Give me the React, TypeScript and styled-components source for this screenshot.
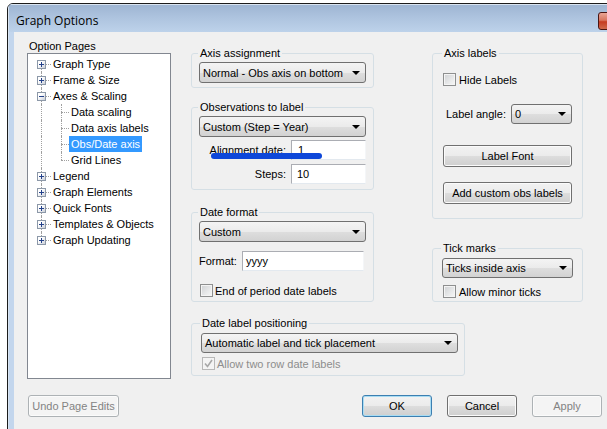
import React from "react";
import styled, { createGlobalStyle } from "styled-components";

const GlobalStyle = createGlobalStyle`
  html, body {
    margin: 0;
    padding: 0;
    background: #ffffff;
    overflow: hidden;
  }
  body {
    font-family: "Liberation Sans", Arial, sans-serif;
    font-size: 11px;
    color: #000000;
  }
`;

const Screen = styled.div`
  width: 607px;
  height: 429px;
  overflow: hidden;
  background: #ffffff;
`;

const Window = styled.div`
  margin: 3px 0 0 7px;
  width: 640px;
  height: 460px;
  box-sizing: border-box;
  border: 1px solid #1c1c1c;
  border-radius: 6px 6px 0 0;
  background: #c3d6ed;
  display: flex;
  flex-direction: column;
  overflow: hidden;
`;

const TitleBar = styled.div`
  height: 28px;
  flex-shrink: 0;
  display: flex;
  align-items: flex-start;
  justify-content: space-between;
  padding: 0 5px 0 8px;
  background: linear-gradient(#9db4d2 0%, #aec4df 50%, #bdd2ea 100%);
  box-shadow: inset 1px 1px 0 #d9e4f1;
`;

const Title = styled.div`
  font-family: "Open Sans", "Noto Sans", sans-serif;
  font-size: 12px;
  line-height: 16px;
  margin-top: 9px;
  color: #000000;
`;

const CloseButton = styled.div`
  margin-top: 8px;
  width: 43px;
  height: 18px;
  box-sizing: border-box;
  border: 1px solid #4a1512;
  border-radius: 3px;
  background: linear-gradient(#e9a596 0%, #d8765f 45%, #c63b22 55%, #d06a4c 100%);
  display: flex;
  align-items: center;
  padding-left: 9px;
`;

const Frame = styled.div`
  flex: 1;
  display: flex;
  padding: 0 6px;
  background: linear-gradient(90deg, #dae6f4 0, #dae6f4 1px, #c3d6ed 1px);
`;

const Content = styled.div`
  flex: 1;
  background: #f0f0f0;
  display: flex;
  flex-direction: column;
`;

const MainRow = styled.div`
  display: flex;
  align-items: flex-start;
  padding: 7px 0 0 13px;
`;

const LeftPane = styled.div`
  width: 144px;
  display: flex;
  flex-direction: column;
`;

const PaneLabel = styled.div`
  line-height: 14px;
  padding-left: 2px;
`;

const TreeBox = styled.div`
  height: 326px;
  box-sizing: border-box;
  border: 1px solid #828790;
  background: #ffffff;
  padding: 2px 0 0 9px;
`;

const TreeRow = styled.div<{ $child?: boolean; $first?: boolean; $last?: boolean }>`
  position: relative;
  height: 16px;
  display: flex;
  align-items: center;
  padding-left: ${(p) => (p.$child ? "24px" : "0")};

  &::before {
    content: "";
    position: absolute;
    left: ${(p) => (p.$child ? "24px" : "4px")};
    top: ${(p) => (p.$first ? "8px" : "0")};
    bottom: ${(p) => (p.$last ? "8px" : "0")};
    border-left: 1px dotted #a0a0a0;
  }

  &::after {
    content: "";
    display: ${(p) => (p.$child ? "block" : "none")};
    position: absolute;
    left: 4px;
    top: 0;
    bottom: 0;
    border-left: 1px dotted #a0a0a0;
  }
`;

const Expander = styled.span<{ $open?: boolean }>`
  position: relative;
  z-index: 1;
  width: 9px;
  height: 9px;
  box-sizing: border-box;
  border: 1px solid #8c98a8;
  background: linear-gradient(135deg, #ffffff 35%, #c9ced6 100%);
  flex-shrink: 0;

  &::before {
    content: "";
    position: absolute;
    left: 1px;
    right: 1px;
    top: 3px;
    height: 1px;
    background: #23418a;
  }

  &::after {
    content: "";
    display: ${(p) => (p.$open ? "none" : "block")};
    position: absolute;
    top: 1px;
    bottom: 1px;
    left: 3px;
    width: 1px;
    background: #23418a;
  }
`;

const Connector = styled.span<{ $w: number }>`
  width: ${(p) => p.$w}px;
  height: 0;
  border-top: 1px dotted #a0a0a0;
  flex-shrink: 0;
`;

const NodeLabel = styled.span<{ $selected?: boolean }>`
  height: 16px;
  line-height: 16px;
  padding: 0 2px;
  white-space: nowrap;
  background: ${(p) => (p.$selected ? "#3399ff" : "transparent")};
  color: ${(p) => (p.$selected ? "#ffffff" : "#000000")};
`;

const MainPane = styled.div`
  margin: 7px 0 0 20px;
  display: flex;
  flex-direction: column;
`;

const TopRow = styled.div`
  display: flex;
  align-items: flex-start;
  gap: 58px;
`;

const Column = styled.div<{ $w: number }>`
  width: ${(p) => p.$w}px;
  display: flex;
  flex-direction: column;
`;

const Group = styled.fieldset<{ $w: number; $pad: string; $mt?: number }>`
  margin: ${(p) => p.$mt ?? 0}px 0 0 0;
  width: ${(p) => p.$w}px;
  box-sizing: border-box;
  min-width: 0;
  padding: ${(p) => p.$pad};
  border: 1px solid #d5dfe5;
  border-radius: 3px;
  display: flex;
  flex-direction: column;
`;

const Legend = styled.legend`
  padding: 0 2px;
  margin-left: -1px;
  line-height: 14px;
  font-size: 11px;
`;

const Select = styled.div<{ $h?: number; $w?: number; $mt?: number }>`
  margin-top: ${(p) => p.$mt ?? 0}px;
  height: ${(p) => p.$h ?? 21}px;
  width: ${(p) => (p.$w ? `${p.$w}px` : "100%")};
  box-sizing: border-box;
  border: 1px solid #707070;
  border-radius: 3px;
  background: linear-gradient(#f4f4f4 0%, #ebebeb 50%, #dedede 51%, #d2d2d2 100%);
  display: flex;
  align-items: center;
  justify-content: space-between;
  padding: 0 5px 0 3px;
  white-space: nowrap;
  flex-shrink: 0;
`;

const Arrow = styled.span`
  width: 0;
  height: 0;
  border-left: 4px solid transparent;
  border-right: 4px solid transparent;
  border-top: 4px solid #000000;
`;

const FieldRow = styled.div<{ $mt: number }>`
  position: relative;
  margin-top: ${(p) => p.$mt}px;
  display: grid;
  grid-template-columns: 1fr 75px;
  column-gap: 5px;
  align-items: center;
`;

const FieldLabel = styled.span`
  text-align: right;
  white-space: nowrap;
`;

const TextBox = styled.div<{ $w?: number; $pl: number }>`
  height: 20px;
  width: ${(p) => (p.$w ? `${p.$w}px` : "100%")};
  box-sizing: border-box;
  border: 1px solid;
  border-color: #abadb3 #f4f6f8 #e3e9ef #abadb3;
  background: #ffffff;
  padding-left: ${(p) => p.$pl}px;
  display: flex;
  align-items: center;
`;

const Highlight = styled.span`
  position: absolute;
  left: 12px;
  top: 13px;
  width: 111px;
  height: 6px;
  border-radius: 3px;
  background: #0d47d9;
`;

const InlineRow = styled.div<{ $mt: number; $ml?: number; $gap: number }>`
  margin-top: ${(p) => p.$mt}px;
  margin-left: ${(p) => p.$ml ?? 0}px;
  display: flex;
  align-items: center;
  gap: ${(p) => p.$gap}px;
  white-space: nowrap;
`;

const Check = styled.span<{ $disabled?: boolean }>`
  width: 13px;
  height: 13px;
  box-sizing: border-box;
  border: 1px solid ${(p) => (p.$disabled ? "#b8b8b8" : "#8e8f8f")};
  background: ${(p) =>
    p.$disabled
      ? "#f4f4f4"
      : "linear-gradient(135deg, #cfd1d3 0%, #e8e9ea 60%, #f7f7f7 100%)"};
  box-shadow: inset 0 0 0 1px #f4f4f4;
  display: flex;
  align-items: center;
  justify-content: center;
  flex-shrink: 0;
`;

const Muted = styled.span`
  color: #8d8d8d;
`;

const Button = styled.div<{ $w: number; $disabled?: boolean; $default?: boolean; $mt?: number }>`
  margin-top: ${(p) => p.$mt ?? 0}px;
  width: ${(p) => p.$w}px;
  height: 22px;
  box-sizing: border-box;
  border: 1px solid
    ${(p) => (p.$disabled ? "#adb2b5" : p.$default ? "#3c7fb1" : "#707070")};
  border-radius: 3px;
  background: ${(p) =>
    p.$disabled
      ? "#f4f4f4"
      : "linear-gradient(#f2f2f2 0%, #ebebeb 50%, #dddddd 51%, #cfcfcf 100%)"};
  box-shadow: ${(p) => (p.$default ? "inset 0 0 0 1px #a8dcf3" : "inset 0 0 0 1px #fbfbfb")};
  color: ${(p) => (p.$disabled ? "#838383" : "#000000")};
  display: flex;
  align-items: center;
  justify-content: center;
  white-space: nowrap;
  flex-shrink: 0;
`;

const BottomBar = styled.div`
  margin-top: 16px;
  display: flex;
  align-items: center;
  padding: 0 38px 0 14px;
`;

const ButtonGroup = styled.div`
  margin-left: auto;
  display: flex;
  gap: 15px;
`;

const CloseGlyph = () => (
  <svg width="12" height="10" viewBox="0 0 12 10">
    <path d="M2 1.5 L10 8.5 M10 1.5 L2 8.5" stroke="#3b1512" strokeWidth="4" strokeLinecap="square" />
    <path d="M2 1.5 L10 8.5 M10 1.5 L2 8.5" stroke="#ffffff" strokeWidth="2.2" strokeLinecap="square" />
  </svg>
);

const TickGlyph = () => (
  <svg width="9" height="9" viewBox="0 0 9 9">
    <path d="M1 4.5 L3.5 7.5 L8 1" fill="none" stroke="#a8a8a8" strokeWidth="1.6" />
  </svg>
);

type Node = { label: string; child?: boolean; open?: boolean; selected?: boolean };

const nodes: Node[] = [
  { label: "Graph Type" },
  { label: "Frame & Size" },
  { label: "Axes & Scaling", open: true },
  { label: "Data scaling", child: true },
  { label: "Data axis labels", child: true },
  { label: "Obs/Date axis", child: true, selected: true },
  { label: "Grid Lines", child: true },
  { label: "Legend" },
  { label: "Graph Elements" },
  { label: "Quick Fonts" },
  { label: "Templates & Objects" },
  { label: "Graph Updating" },
];

const Dropdown = ({ text, h, w, mt }: { text: string; h?: number; w?: number; mt?: number }) => (
  <Select $h={h} $w={w} $mt={mt}>
    <span>{text}</span>
    <Arrow />
  </Select>
);

export default function App() {
  return (
    <Screen>
      <GlobalStyle />
      <Window>
        <TitleBar>
          <Title>Graph Options</Title>
          <CloseButton>
            <CloseGlyph />
          </CloseButton>
        </TitleBar>
        <Frame>
          <Content>
            <MainRow>
              <LeftPane>
                <PaneLabel>Option Pages</PaneLabel>
                <TreeBox>
                  {nodes.map((n, i) => (
                    <TreeRow
                      key={n.label}
                      $child={n.child}
                      $first={i === 0}
                      $last={(!n.child && i === nodes.length - 1) || (n.child && !nodes[i + 1]?.child)}
                    >
                      {!n.child && <Expander $open={n.open} />}
                      <Connector $w={n.child ? 8 : 5} />
                      <NodeLabel $selected={n.selected}>{n.label}</NodeLabel>
                    </TreeRow>
                  ))}
                </TreeBox>
              </LeftPane>

              <MainPane>
                <TopRow>
                  <Column $w={183}>
                    <Group $w={183} $pad="2px 7px 4px 7px">
                      <Legend>Axis assignment</Legend>
                      <Dropdown text="Normal - Obs axis on bottom" />
                    </Group>

                    <Group $w={183} $pad="2px 7px 5px 7px" $mt={12}>
                      <Legend>Observations to label</Legend>
                      <Dropdown text="Custom (Step = Year)" />
                      <FieldRow $mt={3}>
                        <FieldLabel>Alignment date:</FieldLabel>
                        <TextBox $pl={6}>1</TextBox>
                        <Highlight />
                      </FieldRow>
                      <FieldRow $mt={4}>
                        <FieldLabel>Steps:</FieldLabel>
                        <TextBox $pl={5}>10</TextBox>
                      </FieldRow>
                    </Group>

                    <Group $w={183} $pad="2px 7px 4px 7px" $mt={15}>
                      <Legend>Date format</Legend>
                      <Dropdown text="Custom" />
                      <InlineRow $mt={9} $gap={5}>
                        <span>Format:</span>
                        <TextBox $w={122} $pl={3}>yyyy</TextBox>
                      </InlineRow>
                      <InlineRow $mt={13} $ml={1} $gap={2}>
                        <Check />
                        <span>End of period date labels</span>
                      </InlineRow>
                    </Group>
                  </Column>

                  <Column $w={151}>
                    <Group $w={151} $pad="2px 10px 14px 10px">
                      <Legend>Axis labels</Legend>
                      <InlineRow $mt={11} $gap={3}>
                        <Check />
                        <span>Hide Labels</span>
                      </InlineRow>
                      <InlineRow $mt={18} $ml={3} $gap={5}>
                        <span>Label angle:</span>
                        <Select $h={20} $w={61} style={{ marginLeft: "auto" }}>
                          <span>0</span>
                          <Arrow />
                        </Select>
                      </InlineRow>
                      <Button $w={129} $mt={21}>Label Font</Button>
                      <Button $w={129} $mt={15}>Add custom obs labels</Button>
                    </Group>

                    <Group $w={151} $pad="3px 9px 3px 9px" $mt={22}>
                      <Legend>Tick marks</Legend>
                      <Dropdown text="Ticks inside axis" h={20} />
                      <InlineRow $mt={7} $ml={1} $gap={3}>
                        <Check />
                        <span>Allow minor ticks</span>
                      </InlineRow>
                    </Group>
                  </Column>
                </TopRow>

                <Group $w={274} $pad="3px 6px 5px 9px" $mt={14}>
                  <Legend>Date label positioning</Legend>
                  <Dropdown text="Automatic label and tick placement" h={20} />
                  <InlineRow $mt={4} $ml={1} $gap={2}>
                    <Check $disabled>
                      <TickGlyph />
                    </Check>
                    <Muted>Allow two row date labels</Muted>
                  </InlineRow>
                </Group>
              </MainPane>
            </MainRow>

            <BottomBar>
              <Button $w={91} $disabled>
                Undo Page Edits
              </Button>
              <ButtonGroup>
                <Button $w={70} $default>
                  OK
                </Button>
                <Button $w={70}>Cancel</Button>
                <Button $w={70} $disabled>
                  Apply
                </Button>
              </ButtonGroup>
            </BottomBar>
          </Content>
        </Frame>
      </Window>
    </Screen>
  );
}
